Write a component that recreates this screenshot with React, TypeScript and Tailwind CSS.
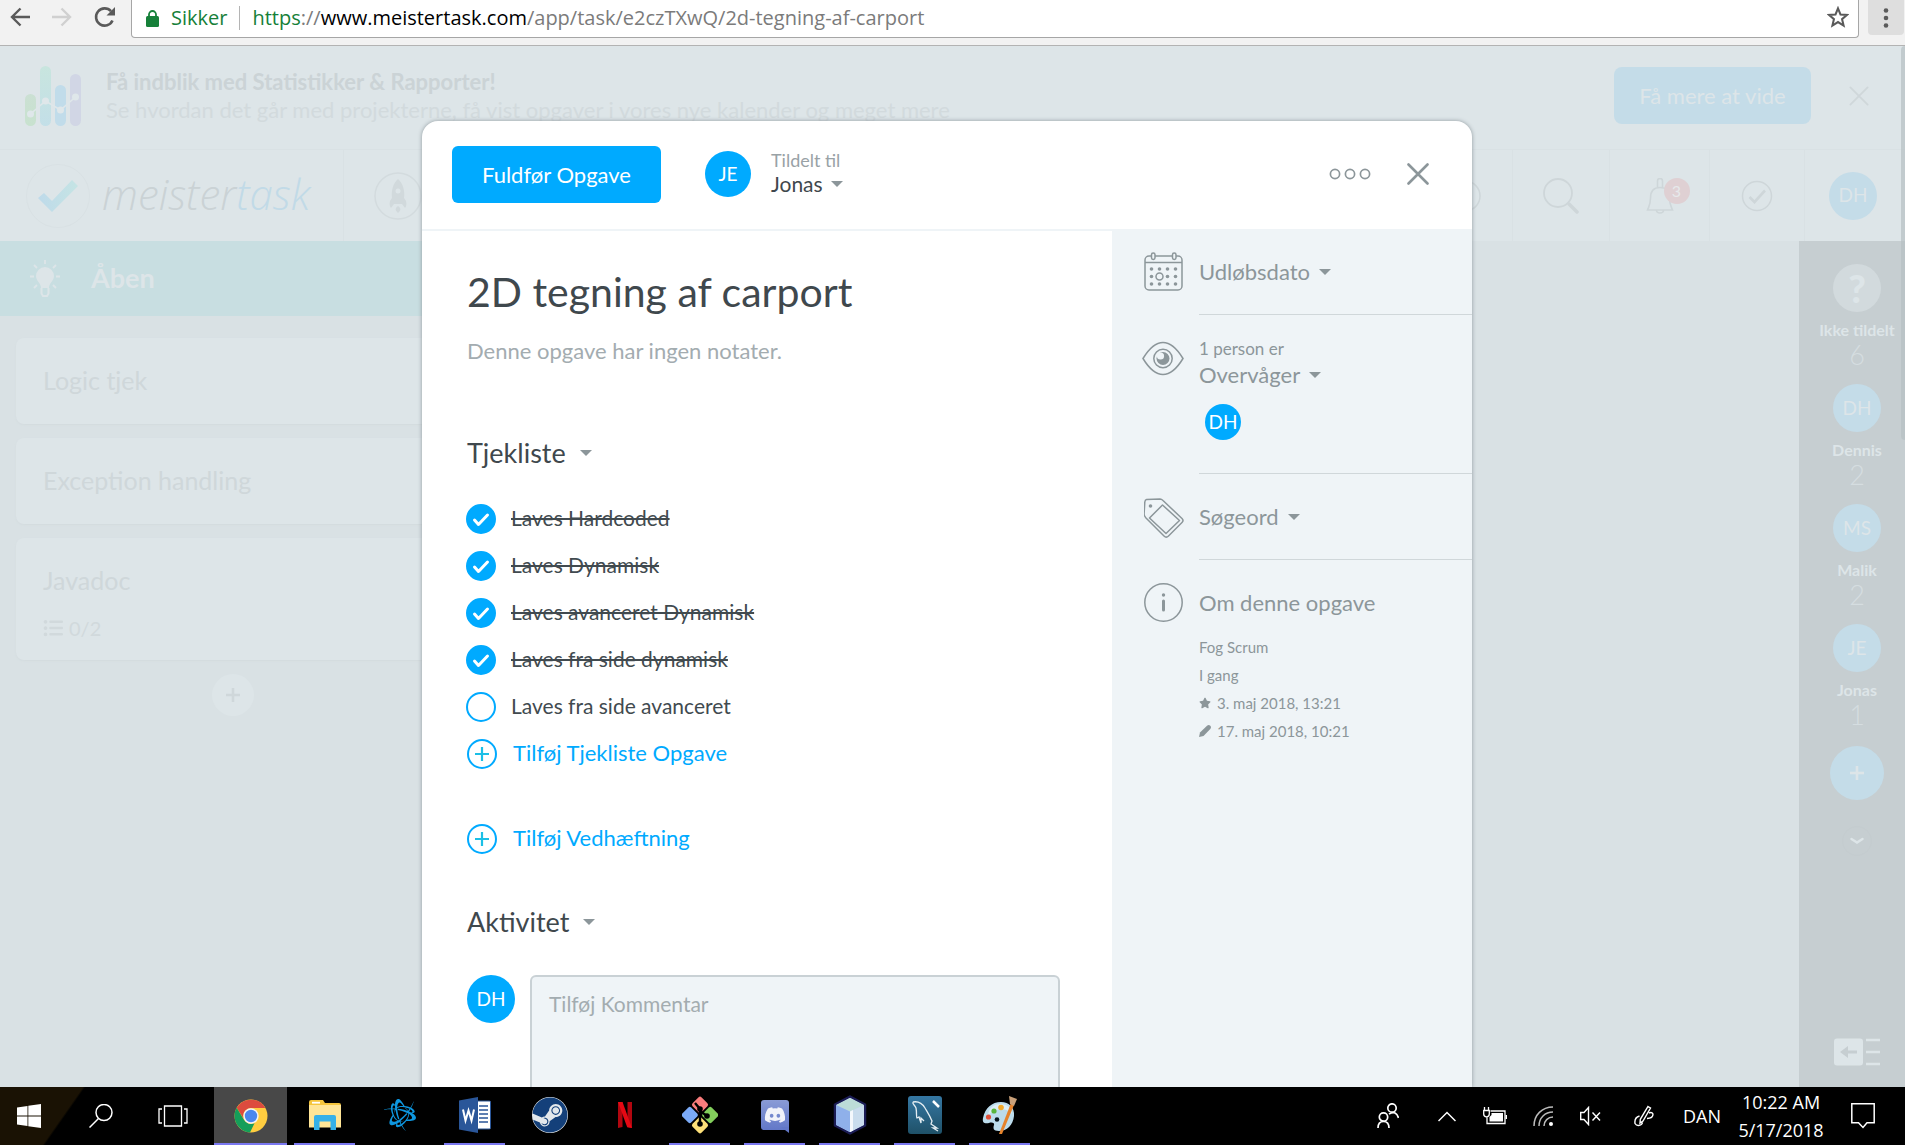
import type { ReactNode } from "react";
import { FaBattleNet, FaDiscord, FaSteam, FaStar, FaListUl } from "react-icons/fa6";

function Caret() {
  return (
    <svg viewBox="0 0 12 6" className="h-1.5 w-3 shrink-0" aria-hidden="true">
      <path d="M0 0h12L6 6z" fill="#8c969a" />
    </svg>
  );
}

function Cross({ className }: { className: string }) {
  return (
    <svg viewBox="0 0 22 22" className={className} fill="none" stroke="currentColor" strokeLinecap="round" aria-hidden="true">
      <path d="M1.5 1.5l19 19M20.5 1.5l-19 19" />
    </svg>
  );
}

function BrowserBar() {
  return (
    <header className="flex h-[46px] shrink-0 border-b border-[#b3b3b3] bg-[#f2f2f2] font-['Open_Sans',sans-serif]">
      <div className="flex h-[34px] w-[131px] shrink-0 items-center gap-[22px] pl-[10px]">
        <button aria-label="Tilbage" className="text-[#5a5a5a]">
          <svg viewBox="0 0 20 20" className="h-5 w-5" fill="none" stroke="currentColor" strokeWidth="2.4">
            <path d="M20 10H2M10.500 1.500L2 10l8.500 8.500" />
          </svg>
        </button>
        <button aria-label="Frem" className="text-[#d0d0d0]">
          <svg viewBox="0 0 20 20" className="h-5 w-5" fill="none" stroke="currentColor" strokeWidth="2.4">
            <path d="M0 10h18M9.500 1.500L18 10l-8.500 8.500" />
          </svg>
        </button>
        <button aria-label="Genindlæs" className="text-[#5a5a5a]">
          <svg viewBox="0 0 22 22" className="h-[22px] w-[22px]" fill="none" stroke="currentColor" strokeWidth="2.6">
            <path d="M18.500 14.500A8.600 8.600 0 1 1 17 5.200" />
            <path d="M21 1v8.500h-8.500z" fill="currentColor" stroke="none" />
          </svg>
        </button>
      </div>
      <div className="flex h-[38px] flex-1 items-start rounded-b-sm border border-t-0 border-[#a6a6a6] bg-white">
        <div className="flex h-9 flex-1 items-center pl-[14px] text-xl leading-8">
          <svg viewBox="0 0 13 17" className="h-[17px] w-[13px]" aria-hidden="true">
            <rect y="6" width="13" height="11" rx="1.500" fill="#168039" />
            <path d="M3 7V4.500a3.500 3.500 0 0 1 7 0V7" fill="none" stroke="#168039" strokeWidth="1.800" />
          </svg>
          <span className="ml-3 text-[#168039]">Sikker</span>
          <span className="mr-3 ml-3 h-6 w-px bg-[#b4b4b4]" />
          <span className="text-[#7b7b7b]">
            <span className="text-[#168039]">https</span>://<span className="text-black">www.meistertask.com</span>
            /app/task/e2czTXwQ/2d-tegning-af-carport
          </span>
        </div>
        <button aria-label="Bogmærk" className="mt-[6px] mr-[9px]">
          <svg viewBox="0 0 24 24" className="h-[22px] w-[22px]" fill="none" stroke="#5a5a5a" strokeWidth="2.200">
            <path d="M12 2.500l2.700 6.700 7.200.5-5.500 4.600 1.700 7-6.100-3.800-6.100 3.800 1.700-7-5.500-4.600 7.200-.5z" />
          </svg>
        </button>
      </div>
      <button aria-label="Menu" className="mr-px ml-[9px] flex h-[35px] w-9 items-center justify-center rounded-b-sm bg-[#dedede]">
        <svg viewBox="0 0 6 20" className="h-5 w-1.5" fill="#5a5a5a">
          <circle cx="3" cy="2.500" r="2.300" />
          <circle cx="3" cy="10" r="2.300" />
          <circle cx="3" cy="17.500" r="2.300" />
        </svg>
      </button>
    </header>
  );
}

function PromoBanner() {
  return (
    <div className="flex h-[104px] items-center border-b border-[#d9e1e4] pr-9 pb-1 pl-[25px]">
      <svg viewBox="0 0 56 60" className="h-[60px] w-14 shrink-0" aria-hidden="true">
        <defs>
          <linearGradient id="barA" x2="0" y2="1"><stop stopColor="#cbe0d3" /><stop offset="1" stopColor="#c8e2cf" /></linearGradient>
          <linearGradient id="barB" x2="0" y2="1"><stop stopColor="#c8e5de" /><stop offset="1" stopColor="#c3dfe8" /></linearGradient>
        </defs>
        <rect y="28" width="11" height="32" rx="5.500" fill="url(#barA)" />
        <rect x="15" width="11" height="60" rx="5.500" fill="url(#barB)" />
        <rect x="30" y="19" width="11" height="41" rx="5.500" fill="#c1dcea" />
        <rect x="45" y="8" width="11" height="52" rx="5.500" fill="#d1d6e5" />
        <path d="M5.500 48L20.500 35l15 9 15-13" fill="none" stroke="#dfe7ea" strokeWidth="1.600" />
        <g fill="#dfe7ea"><circle cx="5.500" cy="48" r="3.500" /><circle cx="20.500" cy="35" r="3.500" /><circle cx="35.500" cy="44" r="3.500" /><circle cx="50.500" cy="31" r="3.500" /></g>
      </svg>
      <div className="ml-[25px] flex-1 text-[22px] leading-7 whitespace-nowrap">
        <p className="font-bold text-[#cbd3d6]">Få indblik med Statistikker &amp; Rapporter!</p>
        <p className="text-[#d2dadd]">Se hvordan det går med projekterne, få vist opgaver i vores nye kalender og meget mere</p>
      </div>
      <button className="h-[57px] w-[197px] rounded-lg bg-[#c4dce8] text-[22px] text-[#dde5e8]">Få mere at vide</button>
      <button aria-label="Luk" className="ml-[38px] text-[#cfd7da]">
        <Cross className="h-5 w-5 stroke-2" />
      </button>
    </div>
  );
}

function AppHeader() {
  return (
    <div className="flex h-[91px] items-stretch text-[#ced6d9]">
      <div className="flex w-[344px] items-center border-r border-[#d9e1e4] pl-[26px]">
        <svg viewBox="0 0 64 64" className="h-16 w-16" aria-hidden="true">
          <defs>
            <linearGradient id="tick" x1="0" x2="1"><stop stopColor="#bedaea" /><stop offset="1" stopColor="#c5e4e4" /></linearGradient>
          </defs>
          <circle cx="32" cy="32" r="31.500" fill="none" stroke="#d9e1e4" />
          <path d="M12 34l6-5 8 8 20-21 6 6-26 26z" fill="url(#tick)" />
        </svg>
        <span className="ml-3 pb-1 font-['Open_Sans',sans-serif] text-[42px] leading-[56px] font-light text-[#cad2d5] italic">
          meister<span className="text-[#c1dae7]">task</span>
        </span>
      </div>
      <button aria-label="Projekter" className="ml-[30px]">
        <svg viewBox="0 0 48 48" className="h-12 w-12" aria-hidden="true">
          <circle cx="24" cy="24" r="23" fill="none" stroke="#d3dbde" strokeWidth="1.500" />
          <path d="M24 7c5 4 7 12 6 19l2 3c1 3 0 6-1 7l-3-4h-8l-3 4c-1-1-2-4-1-7l2-3c-1-7 1-15 6-19z" fill="#d1d9dc" />
          <circle cx="24" cy="19" r="2.500" fill="#dde5e8" />
          <path d="M24 34c4 3 2 5 0 7-2-2-4-4 0-7z" fill="#d1d9dc" />
        </svg>
      </button>
      <div className="flex-1" />
      <button aria-label="Tid" className="flex w-16 items-center border-r border-[#d9e1e4]">
        <svg viewBox="0 0 32 32" className="h-8 w-8" fill="none" stroke="currentColor" strokeWidth="1.500">
          <circle cx="16" cy="16" r="15" />
          <path d="M16 7v9h6" />
        </svg>
      </button>
      <button aria-label="Søg" className="flex w-[97px] items-center justify-center border-r border-[#d9e1e4]">
        <svg viewBox="0 0 36 36" className="h-9 w-9" fill="none" stroke="currentColor" strokeLinecap="round">
          <circle cx="15" cy="15" r="14" strokeWidth="1.800" />
          <path d="M26 26l8 8" strokeWidth="3.500" />
        </svg>
      </button>
      <button aria-label="Notifikationer" className="flex w-[100px] items-center justify-center border-r border-[#d9e1e4]">
        <span className="relative">
          <svg viewBox="0 0 28 36" className="h-9 w-7" fill="none" stroke="currentColor" strokeWidth="1.600">
            <path d="M11.500 9V3a2.500 2.500 0 0 1 5 0v6M1.500 32c2-5 3-6 3-12C4.500 13 8 9.500 14 9.500S23.500 13 23.500 20c0 6 1 7 3 12z" />
            <path d="M10.500 32c0 4 7 4 7 0" />
          </svg>
          <span className="absolute top-0 left-[18px] flex h-[26px] w-[26px] items-center justify-center rounded-full bg-[#dfd0d3] text-base text-[#e6e9eb]">3</span>
        </span>
      </button>
      <button aria-label="Opgaver" className="flex w-[95px] items-center justify-center border-r border-[#d9e1e4]">
        <svg viewBox="0 0 32 32" className="h-8 w-8" fill="none" stroke="currentColor">
          <circle cx="16" cy="16" r="14.500" strokeWidth="1.500" />
          <path d="M8.500 17l5 5L24 10.500" strokeWidth="2.600" />
        </svg>
      </button>
      <button className="mr-7 ml-6 h-12 w-12 self-center rounded-full bg-[#c4dce8] text-[19px] text-[#dde5e8]">DH</button>
    </div>
  );
}

function BoardCard({ title, children }: { title: string; children?: ReactNode }) {
  return (
    <article className="rounded-lg bg-[#dde5e8] px-[27px] pt-[27px] pb-[29px] text-[25px] leading-[30px] text-[#cfd7da] shadow-[0_1px_2px_#d3dbde]">
      <h3>{title}</h3>
      {children}
    </article>
  );
}

function Board() {
  return (
    <section className="flex w-[466px] flex-col">
      <h2 className="flex h-[75px] items-center bg-[#c8dee1] pl-[25px] text-[27px] font-bold text-[#dde5e8]">
        <svg viewBox="0 0 40 48" className="h-12 w-10" aria-hidden="true">
          <path d="M20 12a9 9 0 0 0-9 9c0 5 5 7 5 12h8c0-5 5-7 5-12a9 9 0 0 0-9-9z" fill="#dde5e8" />
          <path d="M16.500 33v5.500l1.500 2.500h4l1.500-2.500V33" fill="none" stroke="#dde5e8" strokeWidth="2" />
          <path d="M20 5v4M9 10l3 3M31 10l-3 3M5 21.500h4M31 21.500h4M9 33l3-3M31 33l-3-3" stroke="#dde5e8" strokeWidth="1.800" />
        </svg>
        <span className="ml-[26px]">Åben</span>
      </h2>
      <div className="flex flex-col gap-[14px] px-4 pt-[22px]">
        <BoardCard title="Logic tjek" />
        <BoardCard title="Exception handling" />
        <BoardCard title="Javadoc">
          <p className="mt-[18px] -mb-3 flex items-center gap-1.5 text-xl leading-[30px] text-[#d1d9dc]">
            <FaListUl />
            0/2
          </p>
        </BoardCard>
        <button aria-label="Tilføj opgave" className="flex h-[42px] w-[42px] items-center justify-center self-center rounded-full bg-[#dde5e8] text-[#cfd7da]">
          <svg viewBox="0 0 14 14" className="h-3.5 w-3.5" stroke="currentColor" strokeWidth="2.600"><path d="M7 0v14M0 7h14" /></svg>
        </button>
      </div>
    </section>
  );
}

const members = [
  { initials: "?", name: "Ikke tildelt", count: 6 },
  { initials: "DH", name: "Dennis", count: 2 },
  { initials: "MS", name: "Malik", count: 2 },
  { initials: "JE", name: "Jonas", count: 1 },
];

function MemberRail() {
  return (
    <aside className="flex w-[106px] flex-col items-center bg-[#c6ced1] pt-[23px] pl-[10px] text-[#dde5e8]">
      {members.map((m) => (
        <div key={m.name} className="flex h-[120px] flex-col items-center whitespace-nowrap">
          {m.initials === "?" ? (
            <button className="h-12 w-12 rounded-full bg-[#d2dadd] text-[38px] leading-[48px] font-black">?</button>
          ) : (
            <button className="h-12 w-12 rounded-full bg-[#c4dce8] text-[19px]">{m.initials}</button>
          )}
          <span className="mt-2 text-base leading-5 font-bold">{m.name}</span>
          <span className="text-[27px] leading-[30px] font-light text-[#d5dde0]">{m.count}</span>
        </div>
      ))}
      <button aria-label="Tilføj medlem" className="mt-0.5 flex h-[54px] w-[54px] shrink-0 items-center justify-center rounded-full bg-[#c4dce8]">
        <svg viewBox="0 0 14 14" className="h-3.5 w-3.5" stroke="currentColor" strokeWidth="2.600"><path d="M7 0v14M0 7h14" /></svg>
      </button>
      <button aria-label="Vis flere" className="mt-[26px] flex h-[30px] w-[30px] items-center justify-center rounded-full border border-[#c4cccf]">
        <svg viewBox="0 0 14 8" className="h-2 w-3.5" fill="none" stroke="currentColor" strokeWidth="2.400" strokeLinecap="round"><path d="M1.500 2L7 5.500 12.500 2" /></svg>
      </button>
      <button aria-label="Skjul panel" className="mt-auto mb-[21px]">
        <svg viewBox="0 0 46 28" className="h-7 w-[46px]">
          <rect width="29" height="27" y=".5" rx="3" fill="#dde5e8" />
          <path d="M6 14l8-6v4.500h9v3h-9V20z" fill="#c6ced1" />
          <path d="M32 2h14M32 14h14M32 26h14" stroke="#dde5e8" strokeWidth="2.600" />
        </svg>
      </button>
    </aside>
  );
}

const checklist = [
  { label: "Laves Hardcoded", done: true },
  { label: "Laves Dynamisk", done: true },
  { label: "Laves avanceret Dynamisk", done: true },
  { label: "Laves fra side dynamisk", done: true },
  { label: "Laves fra side avanceret", done: false },
];

function CheckRow({ label, done }: { label: string; done: boolean }) {
  return (
    <li>
      <label className="flex h-[47px] items-center gap-[15px]">
        <span className="relative -ml-px h-[30px] w-[30px] shrink-0">
          <input type="checkbox" defaultChecked={done} className="peer block h-[30px] w-[30px] appearance-none rounded-full border-2 border-[#00aaff] checked:bg-[#00aaff]" />
          <svg viewBox="0 0 30 30" className="pointer-events-none absolute inset-0 opacity-0 peer-checked:opacity-100" fill="none" stroke="#fff" strokeWidth="3" strokeLinecap="round" strokeLinejoin="round">
            <path d="M8.500 16l4 4.500 9-9.500" />
          </svg>
        </span>
        <span className={done ? "pb-0.5 line-through decoration-2" : "pb-0.5"}>{label}</span>
      </label>
    </li>
  );
}

function AddButton({ children }: { children: ReactNode }) {
  return (
    <button className="flex h-[47px] items-center gap-4 text-[22px] text-[#00aaff]">
      <svg viewBox="0 0 30 30" className="h-[30px] w-[30px]" fill="none">
        <circle cx="15" cy="15" r="14" stroke="#00aaff" strokeWidth="2" />
        <path d="M15 8v14M8 15h14" stroke="#1bbfe6" strokeWidth="2.200" />
      </svg>
      <span className="pb-0.5">{children}</span>
    </button>
  );
}

function SectionTitle({ children, className }: { children: ReactNode; className: string }) {
  return (
    <h2 className={className}>
      <button className="flex items-center gap-[14px] text-[27px] leading-8 text-[#3f484d]">
        {children}
        <Caret />
      </button>
    </h2>
  );
}

function TaskMain() {
  return (
    <div className="flex-1 border-t-2 border-[#eff4f7] pt-[37px] pr-[52px] pl-[45px] text-[21px] text-[#414a4f]">
      <h1 className="text-[41px] leading-[48px] text-[#3f484d]">2D tegning af carport</h1>
      <p className="mt-[21px] text-[22px] leading-7 text-[#a3acb0]">Denne opgave har ingen notater.</p>
      <SectionTitle className="mt-[72px]">Tjekliste</SectionTitle>
      <ul className="mt-[26px]">
        {checklist.map((c) => (
          <CheckRow key={c.label} {...c} />
        ))}
      </ul>
      <AddButton>Tilføj Tjekliste Opgave</AddButton>
      <div className="mt-[38px]">
        <AddButton>Tilføj Vedhæftning</AddButton>
      </div>
      <SectionTitle className="mt-11">Aktivitet</SectionTitle>
      <div className="mt-[37px] flex items-start gap-[15px]">
        <span className="flex h-12 w-12 shrink-0 items-center justify-center rounded-full bg-[#00aaff] text-[19px] text-white">DH</span>
        <textarea
          aria-label="Kommentar"
          placeholder="Tilføj Kommentar"
          className="h-40 flex-1 resize-none rounded-md border-2 border-[#c9d1d5] bg-[#eff4f7] px-[17px] py-[13px] leading-7 placeholder:text-[#a3acb0]"
        />
      </div>
    </div>
  );
}

function CalendarIcon() {
  const dots = [[7.500, 17], [15.500, 17], [23.500, 17], [31.500, 17], [7.500, 24.500], [23.500, 24.500], [31.500, 24.500], [7.500, 32], [15.500, 32], [23.500, 32], [31.500, 32]];
  return (
    <svg viewBox="0 0 39 39" className="h-[39px] w-[39px]" fill="none" stroke="#8c969a" strokeWidth="1.500">
      <path d="M7 4H5a4 4 0 0 0-4 4v26a4 4 0 0 0 4 4h29a4 4 0 0 0 4-4V8a4 4 0 0 0-4-4h-2M11 4h17M1 10.500h37" />
      <rect x="7.500" y="1" width="3.500" height="6.500" rx="1.700" />
      <rect x="28.500" y="1" width="3.500" height="6.500" rx="1.700" />
      <circle cx="15.500" cy="24.500" r="3.500" />
      {dots.map(([x, y]) => (
        <circle key={`${x}-${y}`} cx={x} cy={y} r="1.800" fill="#8c969a" stroke="none" />
      ))}
    </svg>
  );
}

function EyeIcon() {
  return (
    <svg viewBox="0 0 42 39" className="-mx-0.5 h-[39px] w-[42px]" fill="none" stroke="#8c969a" strokeWidth="1.500">
      <path d="M1 19.500C8 8 14 3.500 21 3.500S34 8 41 19.500C34 31 28 35.500 21 35.500S8 31 1 19.500z" />
      <circle cx="21" cy="19.500" r="9.200" />
      <circle cx="21" cy="19.500" r="6.500" fill="#8c969a" stroke="none" />
      <circle cx="18.500" cy="17" r="3.600" fill="#eff4f7" stroke="none" />
    </svg>
  );
}

function TagIcon() {
  return (
    <svg viewBox="1 0 40 40" className="h-10 w-10" fill="none" stroke="#8c969a" strokeWidth="1.500" strokeLinejoin="round">
      <path d="M3.500 1.500L17 1c1.500 0 2 .5 3 1.500l19 18c1.500 1.500 1.500 2.500 0 4L25.500 38c-1.500 1.500-3 1.500-4.500 0L3 20C1.800 18.500 1 17.500 1.100 16L1.800 4c.2-1.500.5-2.300 1.700-2.500z" />
      <path d="M19.500 7L36.500 22.500 23 35.500 6.500 20z" />
      <circle cx="7.500" cy="8" r="1.800" fill="#8c969a" stroke="none" />
    </svg>
  );
}

function InfoIcon() {
  return (
    <svg viewBox="0 0 39 39" className="h-[39px] w-[39px]" fill="none" stroke="#8c969a">
      <circle cx="19.500" cy="19.500" r="18.700" strokeWidth="1.500" />
      <circle cx="19.500" cy="12" r="1.700" fill="#8c969a" stroke="none" />
      <path d="M19.500 18v9" strokeWidth="3" strokeLinecap="round" />
    </svg>
  );
}

function TaskAside() {
  return (
    <aside className="w-[360px] shrink-0 bg-[#eff4f7] pt-px pl-8 text-[22px] leading-7 text-[#8c969a]">
      <section className="flex gap-4">
        <span className="mt-[22px] w-[39px] shrink-0"><CalendarIcon /></span>
        <div className="flex h-[85px] flex-1 items-center border-b border-[#d0d7da]">
          <button className="flex items-center gap-[9px]">Udløbsdato <Caret /></button>
        </div>
      </section>
      <section className="flex gap-4">
        <span className="mt-6 w-[39px] shrink-0"><EyeIcon /></span>
        <div className="flex-1 border-b border-[#d0d7da] pt-[22px] pb-[33px]">
          <p className="text-[17px] leading-6">1 person er</p>
          <button className="flex items-center gap-[9px]">Overvåger <Caret /></button>
          <span className="mt-[15px] ml-1.5 flex h-9 w-9 items-center justify-center rounded-full bg-[#00aaff] text-[19px] text-white">DH</span>
        </div>
      </section>
      <section className="flex gap-4">
        <span className="mt-6 w-[39px] shrink-0"><TagIcon /></span>
        <div className="flex h-[86px] flex-1 items-center border-b border-[#d0d7da]">
          <button className="flex items-center gap-[9px]">Søgeord <Caret /></button>
        </div>
      </section>
      <section className="flex gap-4 pt-[23px]">
        <span className="w-[39px] shrink-0"><InfoIcon /></span>
        <div>
          <h2 className="leading-10">Om denne opgave</h2>
          <ul className="mt-[10px] text-[15px] leading-7">
            <li>Fog Scrum</li>
            <li>I gang</li>
            <li className="flex items-center gap-1.5"><FaStar className="h-3 w-3" />3. maj 2018, 13:21</li>
            <li className="flex items-center gap-1.5">
              <svg viewBox="0 0 12 12" className="h-3 w-3" fill="#8c969a"><path d="M0 12l1-4.500L8 .8c1.200-1 2.300-1 3.300 0 .9 1 .9 2 0 3.200L4.500 11z" /></svg>
              17. maj 2018, 10:21
            </li>
          </ul>
        </div>
      </section>
    </aside>
  );
}

function TaskDialog() {
  return (
    <div role="dialog" aria-label="2D tegning af carport" className="flex w-[1050px] flex-col overflow-hidden rounded-t-2xl bg-white shadow-[0_0_4px_#8f999e]">
      <div className="flex h-[108px] shrink-0 items-center pr-[43px] pb-0.5 pl-[30px]">
        <button className="h-[57px] w-[209px] rounded-md bg-[#00aaff] text-[22px] text-white">Fuldfør Opgave</button>
        <span className="ml-11 flex h-[46px] w-[46px] items-center justify-center rounded-full bg-[#00aaff] text-[19px] text-white">JE</span>
        <div className="ml-5 -mt-1">
          <p className="text-lg leading-6 text-[#99a2a6]">Tildelt til</p>
          <button className="flex items-center gap-2 text-[21px] leading-6 text-[#3f484d]">Jonas <Caret /></button>
        </div>
        <button aria-label="Flere valg" className="ml-auto">
          <svg viewBox="0 0 42 12" className="h-3 w-[42px]" fill="none" stroke="#8c969a" strokeWidth="1.700">
            <circle cx="6" cy="6" r="4.600" /><circle cx="21" cy="6" r="4.600" /><circle cx="36" cy="6" r="4.600" />
          </svg>
        </button>
        <button aria-label="Luk opgave" className="ml-9 text-[#8c969a]">
          <Cross className="h-[22px] w-[22px] stroke-[2.600]" />
        </button>
      </div>
      <div className="flex flex-1">
        <TaskMain />
        <TaskAside />
      </div>
    </div>
  );
}

function WindowsLogo() {
  return (
    <svg viewBox="0 0 24 24" className="h-6 w-6" fill="#fff"><path d="M0 3.500L10.500 2v9.500H0zM11.300 1.800L24 0v11.500H11.300zM0 12.500h10.500V22L0 20.500zM11.300 12.500H24V24l-12.700-1.800z" /></svg>
  );
}

function ChromeLogo() {
  return (
    <svg viewBox="0 0 34 34" className="h-[34px] w-[34px]">
      <circle cx="17" cy="17" r="16.500" fill="#ffcd40" />
      <path d="M2.700 8.800A16.500 16.500 0 0 1 31.300 9H17a8 8 0 0 0-7.200 11z" fill="#dd4b3e" />
      <path d="M2.700 8.800L10.100 21A8 8 0 0 0 20.500 24.200L16 33.500A16.500 16.500 0 0 1 2.700 8.800z" fill="#149e5a" />
      <circle cx="17" cy="17" r="7.700" fill="#f3f3f3" />
      <circle cx="17" cy="17" r="6.200" fill="#4a87ee" />
    </svg>
  );
}

function FolderLogo() {
  return (
    <svg viewBox="0 0 32 30" className="h-[30px] w-8">
      <path d="M0 2a2 2 0 0 1 2-2h12l2 3h14a2 2 0 0 1 2 2v20H0z" fill="#f5c53c" />
      <path d="M3 1.800h8v1.800H3z" fill="#fff" />
      <path d="M0 5h32v22.500H0z" fill="#ffe596" />
      <path d="M5 30V17a2 2 0 0 1 2-2h18a2 2 0 0 1 2 2v13h-5.500v-8.500h-11V30z" fill="#36b1e8" />
    </svg>
  );
}

function WordLogo() {
  return (
    <svg viewBox="0 0 32 36" className="h-9 w-8">
      <path d="M18 4h12.500a1 1 0 0 1 1 1v26a1 1 0 0 1-1 1H18z" fill="#fff" stroke="#2a5699" />
      <path d="M20 9h9M20 13h9M20 17h9M20 21h9M20 25h9" stroke="#2a5699" strokeWidth="1.600" />
      <path d="M0 3.500L19 0v36L0 32.500z" fill="#2a5699" />
      <path d="M4 12.500l2.500 11L9.500 13.500l3 10L15 12.500" fill="none" stroke="#fff" strokeWidth="2" />
    </svg>
  );
}

function SteamLogo() {
  return <FaSteam className="h-9 w-9 rounded-full bg-[#e3e8ec] text-[#14407a]" />;
}

function NetflixLogo() {
  return (
    <svg viewBox="0 0 14 26" className="h-[26px] w-3.5">
      <path d="M0 0h4.500v25L0 26zM9.500 0H14v26l-4.500-1z" fill="#b1060f" />
      <path d="M0 0h4.500L14 26l-4.800-.8z" fill="#e50914" />
    </svg>
  );
}

function GitLogo() {
  return (
    <svg viewBox="0 0 36 40" className="h-10 w-9">
      <g transform="rotate(45 18 20)">
        <rect x="4.500" y="6.500" width="12.500" height="12.500" rx="2" fill="#f97c7c" />
        <rect x="19" y="6.500" width="12.500" height="12.500" rx="2" fill="#83cf5c" />
        <rect x="4.500" y="21" width="12.500" height="12.500" rx="2" fill="#7baaf7" />
        <rect x="19" y="21" width="12.500" height="12.500" rx="2" fill="#fde079" />
      </g>
      <path d="M13 8l5 6v15M18 16l7 5" stroke="#000" strokeWidth="2.400" fill="none" />
      <circle cx="18" cy="14" r="2.800" /><circle cx="25" cy="21" r="2.800" /><circle cx="18" cy="29" r="2.800" />
    </svg>
  );
}

function DiscordLogo() {
  return (
    <span className="relative flex h-[30px] w-7 items-center justify-center rounded-[3px] bg-linear-to-b from-[#8a9bd6] to-[#6378c8]">
      <FaDiscord className="h-[22px] w-[22px] text-[#f2f3fa]" />
      <svg viewBox="0 0 8 6" className="absolute right-0 -bottom-[3px] h-1.5 w-2"><path d="M0 0h8v6z" fill="#6378c8" /></svg>
    </span>
  );
}

function CubeLogo() {
  return (
    <svg viewBox="0 0 34 40" className="h-10 w-[34px]" strokeLinejoin="round">
      <path d="M17 1.500L32 9.500v21L17 38.500 2 30.500v-21z" fill="#b9cdf0" stroke="#1b1c55" strokeWidth="2.500" />
      <path d="M17 3L31 10 17 16.500 3 10z" fill="#bcdcd8" />
      <path d="M3 10l14 6.500V37L3 30z" fill="#8fb0ea" />
      <path d="M31 10l-14 6.500V37l14-7z" fill="#c9dced" />
      <path d="M17 16.500V37l3-1.500V15z" fill="#f4f8fc" />
    </svg>
  );
}

function DolphinLogo() {
  return (
    <svg viewBox="0 0 34 38" className="h-[38px] w-[34px]" fill="none">
      <defs><linearGradient id="sea" x2="0" y2="1"><stop stopColor="#3577a3" /><stop offset="1" stopColor="#1f5168" /></linearGradient></defs>
      <rect width="34" height="38" rx="3" fill="url(#sea)" />
      <path d="M5 6c5-1 9 1 12 6 3 5 5 8 7 13l-1 3 6 4-4 0 5 3M5 6c-1 2 2 3 3 6 1 5 0 8 1 10l2-1 2 6v-5l3 3" stroke="#e4edf2" strokeWidth="1.300" />
      <path d="M25 5l3 3M27 7l4 4" stroke="#fff" strokeWidth="2.500" />
    </svg>
  );
}

function PaintLogo() {
  return (
    <svg viewBox="0 0 36 40" className="h-10 w-9">
      <path d="M19 7c8 0 14 6 13 14-1 9-7 15-15 15-6 0-6-3-5-6 1-2-2-3-5-2-4 1-7 0-6-5C3 13 10 7 19 7z" fill="#bcdcec" />
      <path d="M18 9c7 0 12 4 12 10-5-6-14-7-24 1C7 13 11 9 18 9z" fill="#dceef6" />
      <circle cx="6.500" cy="22" r="2.600" fill="#e0503a" />
      <circle cx="12" cy="16" r="2.600" fill="#5ab53c" />
      <circle cx="19" cy="12.500" r="2.800" fill="#f0a92c" />
      <circle cx="15" cy="24.500" r="2.300" fill="#07141c" />
      <path d="M29 8l3 2L20 39h-3z" fill="#e5832c" />
      <path d="M27 1l8 3-3 7-4-2z" fill="#c9a079" />
    </svg>
  );
}

const apps: { name: string; icon: ReactNode; open: boolean }[] = [
  { name: "Stifinder", icon: <FolderLogo />, open: true },
  { name: "Battle.net", icon: <FaBattleNet className="h-8 w-8 text-[#0e97e0]" />, open: false },
  { name: "Word", icon: <WordLogo />, open: true },
  { name: "Steam", icon: <SteamLogo />, open: false },
  { name: "Netflix", icon: <NetflixLogo />, open: false },
  { name: "Git", icon: <GitLogo />, open: true },
  { name: "Discord", icon: <DiscordLogo />, open: true },
  { name: "NetBeans", icon: <CubeLogo />, open: true },
  { name: "MySQL Workbench", icon: <DolphinLogo />, open: true },
  { name: "Paint", icon: <PaintLogo />, open: true },
];

function Taskbar() {
  return (
    <footer className="flex h-[58px] shrink-0 items-stretch bg-black bg-[linear-gradient(125deg,#1a1204_68px,#000_70px)] font-['Open_Sans',sans-serif] text-white">
      <button aria-label="Start" className="flex w-[58px] items-center justify-center"><WindowsLogo /></button>
      <button aria-label="Søg i Windows" className="flex w-[86px] items-center justify-center">
        <svg viewBox="0 0 24 24" className="h-6 w-6" fill="none" stroke="#fff" strokeWidth="1.500"><circle cx="15" cy="8.500" r="8" /><path d="M9.500 14.500L.5 23.500" /></svg>
      </button>
      <button aria-label="Opgavevisning" className="mr-3 flex w-[58px] items-center justify-center">
        <svg viewBox="0 0 30 22" className="h-[22px] w-[30px]" fill="none" stroke="#fff" strokeWidth="1.300"><path d="M6.500 1h17v20h-17zM4 4H1v14h3M26 4h3v14h-3" /></svg>
      </button>
      <button aria-label="Chrome" className="mr-[7px] flex w-[73px] items-center justify-center border-b-2 border-[#7a78f0] bg-[#484848] pt-0.5"><ChromeLogo /></button>
      <div className="flex gap-[14px]">
        {apps.map((a) => (
          <button key={a.name} aria-label={a.name} className={`flex w-[61px] items-center justify-center border-b-2 ${a.open ? "border-[#7a78f0]" : "border-transparent"}`}>
            {a.icon}
          </button>
        ))}
      </div>
      <div className="ml-auto flex items-center">
        <button aria-label="Kontakter" className="mr-[39px]">
          <svg viewBox="0 0 22 26" className="h-[26px] w-[22px]" fill="none" stroke="#fff" strokeWidth="1.700">
            <circle cx="15" cy="5" r="4.200" /><circle cx="6.500" cy="14" r="4.200" />
            <path d="M12 11c5-3 8-1 9.500 4M1 25c0-4 2-6.500 5.500-6.500S12 21 12 25" />
          </svg>
        </button>
        <button aria-label="Skjulte ikoner" className="mr-[27px]">
          <svg viewBox="0 0 18 11" className="h-[11px] w-[18px]" fill="none" stroke="#fff" strokeWidth="1.500"><path d="M.5 10L9 1.500l8.500 8.500" /></svg>
        </button>
        <button aria-label="Batteri" className="mr-[26px]">
          <svg viewBox="0 0 24 18" className="h-[18px] w-6" fill="none" stroke="#fff" strokeWidth="1.300">
            <path d="M7.500 4H22v12.500H4V10M1.500 0v3M5.500 0v3M.7 3.500h5.600V7a2.800 2.800 0 0 1-5.600 0zM23.500 8v4" /><path d="M8.500 6H20v8.500H6.500V10l2-2z" fill="#fff" stroke="none" />
          </svg>
        </button>
        <button aria-label="Netværk" className="mr-[27px]">
          <svg viewBox="0 0 20 20" className="h-5 w-5" fill="none" stroke="#bbb" strokeWidth="1.500">
            <path d="M1 20C1 9 9 1 20 1M6 20c0-8 6-14 14-14M11 20c0-5 4-9 9-9" /><circle cx="18" cy="18" r="2" fill="#fff" stroke="none" />
          </svg>
        </button>
        <button aria-label="Lydstyrke" className="mr-[33px]">
          <svg viewBox="0 0 21 20" className="h-5 w-[21px]" fill="none" stroke="#fff" strokeWidth="1.400"><path d="M.7 6.500H4l4.500-5v17L4 13.500H.7zM12.500 6.500l7.500 8M20 6.500l-7.500 8" /></svg>
        </button>
        <button aria-label="Pen" className="mr-[29px]">
          <svg viewBox="0 0 20 22" className="h-[22px] w-5" fill="none" stroke="#fff" strokeWidth="1.400">
            <path d="M14 1.500l2.500 1.500L9 16l-3 2 .3-3.700zM5.500 11C2 12 .5 15 1 18.500c2 3.500 7 2 7.500-1M13 13.500c4 0 6-1.500 6-4.500-1-2-3-1.500-4-1" />
          </svg>
        </button>
        <span className="w-[38px] text-lg">DAN</span>
        <div className="ml-4 w-[88px] text-center text-lg leading-7 whitespace-nowrap">
          <p>10:22 AM</p>
          <p>5/17/2018</p>
        </div>
        <button aria-label="Meddelelser" className="mr-[30px] ml-[26px]">
          <svg viewBox="0 0 24 26" className="h-[26px] w-6" fill="none" stroke="#fff" strokeWidth="1.500"><path d="M.8.8h22.400v19H16L12 24.500 7.500 19.800H.8z" /></svg>
        </button>
      </div>
    </footer>
  );
}

export default function App() {
  return (
    <div className="flex h-screen flex-col overflow-hidden font-[Lato,sans-serif]">
      <BrowserBar />
      <div className="relative flex min-h-0 flex-1 flex-col overflow-hidden">
        <main className="flex flex-1 flex-col bg-[#dde5e8]">
          <PromoBanner />
          <AppHeader />
          <div className="flex flex-1 justify-between bg-[#d9e1e4]">
            <Board />
            <MemberRail />
          </div>
        </main>
        <div className="absolute inset-0 flex justify-center overflow-hidden pt-[75px] pr-[11px]">
          <TaskDialog />
        </div>
        <div className="absolute top-0 right-0 h-[394px] w-1 rounded-l bg-[#b7c0c3]/70" />
      </div>
      <Taskbar />
    </div>
  );
}
